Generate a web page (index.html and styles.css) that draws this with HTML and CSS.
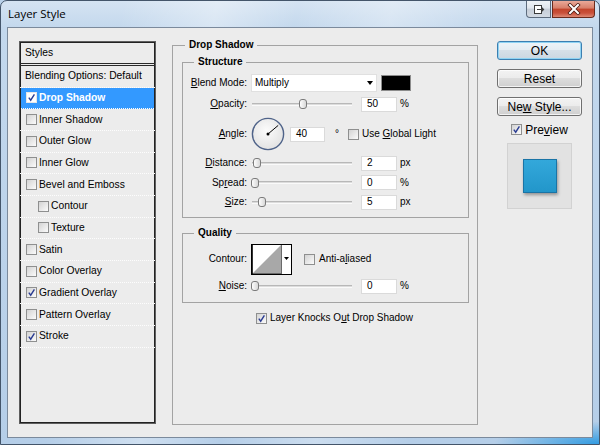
FILE: index.html
```html
<!DOCTYPE html>
<html>
<head>
<meta charset="utf-8">
<title>Layer Style</title>
<link rel="stylesheet" href="styles.css">
</head>
<body>
<div class="window">
  <div class="titlebar">
    <span class="caption">Layer Style</span>
    <div class="caption-buttons">
      <span class="cbtn cbtn-extra">
        <svg width="12" height="11" viewBox="0 0 12 11"><rect x="1.5" y="1.5" width="7" height="8" fill="#fff" stroke="#3b3b3b"/><path d="M4 5.5 H10.5 M8.5 3.5 L10.5 5.5 L8.5 7.5" fill="none" stroke="#3b3b3b" stroke-width="1.2"/></svg>
      </span>
      <span class="cbtn cbtn-close">
        <svg width="14" height="12" viewBox="0 0 14 12"><path d="M3 2 L11 10 M11 2 L3 10" stroke="#4a1a10" stroke-width="3.6" stroke-linecap="square"/><path d="M3 2 L11 10 M11 2 L3 10" stroke="#fff" stroke-width="2" stroke-linecap="square"/></svg>
      </span>
    </div>
  </div>

  <div class="client">
    <div class="styles-panel">
      <div class="styles-head">Styles</div>
      <div class="style-row plain">Blending Options: Default</div>
      <div class="style-row selected"><span class="cb"><svg viewBox="0 0 9 9"><path d="M1.8 4.6 L3.7 7.2 L7.4 1.4"/></svg></span>Drop Shadow</div>
      <div class="style-row"><span class="cb"></span>Inner Shadow</div>
      <div class="style-row"><span class="cb"></span>Outer Glow</div>
      <div class="style-row"><span class="cb"></span>Inner Glow</div>
      <div class="style-row"><span class="cb"></span>Bevel and Emboss</div>
      <div class="style-row sub"><span class="cb"></span>Contour</div>
      <div class="style-row sub"><span class="cb"></span>Texture</div>
      <div class="style-row"><span class="cb"></span>Satin</div>
      <div class="style-row"><span class="cb"></span>Color Overlay</div>
      <div class="style-row"><span class="cb"><svg viewBox="0 0 9 9"><path d="M1.8 4.6 L3.7 7.2 L7.4 1.4"/></svg></span>Gradient Overlay</div>
      <div class="style-row"><span class="cb"></span>Pattern Overlay</div>
      <div class="style-row"><span class="cb"><svg viewBox="0 0 9 9"><path d="M1.8 4.6 L3.7 7.2 L7.4 1.4"/></svg></span>Stroke</div>
    </div>

    <fieldset class="group group-outer">
      <legend>Drop Shadow</legend>

      <fieldset class="group group-inner group-structure">
        <legend>Structure</legend>
        <div class="form-grid structure-grid">
          <span class="lbl"><u>B</u>lend Mode:</span>
          <div class="ctl">
            <div class="select"><span>Multiply</span><span class="select-arrow"></span></div>
            <span class="swatch"></span>
          </div>

          <span class="lbl"><u>O</u>pacity:</span>
          <div class="ctl">
            <div class="slider"><span class="track"></span><span class="thumb" style="left:47px"></span></div>
            <span class="num">50</span><span class="unit">%</span>
          </div>

          <span class="lbl"><u>A</u>ngle:</span>
          <div class="ctl">
            <svg class="dial" width="34" height="34" viewBox="0 0 34 34">
              <defs><radialGradient id="dg" cx="45%" cy="40%" r="65%"><stop offset="0" stop-color="#fcfcfc"/><stop offset="1" stop-color="#e0e0e0"/></radialGradient></defs>
              <circle cx="17" cy="17" r="15.6" fill="url(#dg)" stroke="#4f6389" stroke-width="1.4"/>
              <line x1="17" y1="17" x2="27.2" y2="8.4" stroke="#000" stroke-width="1"/>
              <circle cx="17" cy="17" r="1.5" fill="#000"/>
            </svg>
            <span class="num num-angle">40</span><span class="deg">°</span>
            <span class="check-label check-global"><span class="cb"></span><span>Use <u>G</u>lobal Light</span></span>
          </div>

          <span class="lbl"><u>D</u>istance:</span>
          <div class="ctl">
            <div class="slider"><span class="track"></span><span class="thumb" style="left:1px"></span></div>
            <span class="num">2</span><span class="unit">px</span>
          </div>

          <span class="lbl">Sp<u>r</u>ead:</span>
          <div class="ctl">
            <div class="slider"><span class="track"></span><span class="thumb" style="left:-1px"></span></div>
            <span class="num">0</span><span class="unit">%</span>
          </div>

          <span class="lbl"><u>S</u>ize:</span>
          <div class="ctl">
            <div class="slider"><span class="track"></span><span class="thumb" style="left:6px"></span></div>
            <span class="num">5</span><span class="unit">px</span>
          </div>
        </div>
      </fieldset>

      <fieldset class="group group-inner group-quality">
        <legend>Quality</legend>
        <div class="form-grid quality-grid">
          <span class="lbl">Contour:</span>
          <div class="ctl">
            <svg class="contour" width="41" height="31" viewBox="0 0 41 31">
              <rect x="0.5" y="0.5" width="40" height="30" fill="#fff" stroke="#000"/>
              <polygon points="1.5,29.5 30,1 30,29.5" fill="#a8a8a8"/>
              <line x1="30.5" y1="1" x2="30.5" y2="30" stroke="#6a6a6a"/>
              <path d="M1.2 1 V30 H30" fill="none" stroke="#000" stroke-width="1.2"/>
              <polygon points="33,13 38,13 35.5,16" fill="#000"/>
            </svg>
            <span class="check-label check-anti"><span class="cb"></span><span>Anti-a<u>l</u>iased</span></span>
          </div>

          <span class="lbl"><u>N</u>oise:</span>
          <div class="ctl">
            <div class="slider"><span class="track"></span><span class="thumb" style="left:-1px"></span></div>
            <span class="num">0</span><span class="unit">%</span>
          </div>
        </div>
      </fieldset>

      <div class="knockout check-label"><span class="cb"><svg viewBox="0 0 9 9"><path d="M1.8 4.6 L3.7 7.2 L7.4 1.4"/></svg></span><span>Layer Knocks O<u>u</u>t Drop Shadow</span></div>
    </fieldset>

    <div class="actions">
      <div class="btn btn-default"><span>OK</span></div>
      <div class="btn"><span>Reset</span></div>
      <div class="btn"><span>Ne<u>w</u> Style...</span></div>
      <div class="preview-check check-label"><span class="cb"><svg viewBox="0 0 9 9"><path d="M1.8 4.6 L3.7 7.2 L7.4 1.4"/></svg></span><span>Pre<u>v</u>iew</span></div>
      <div class="preview-box"><span class="preview-swatch"></span></div>
    </div>
  </div>
</div>
</body>
</html>
```

FILE: styles.css
```css
* { box-sizing: border-box; }
html, body { margin: 0; padding: 0; }
body {
  width: 600px;
  height: 445px;
  overflow: hidden;
  font-family: "Liberation Sans", Arial, sans-serif;
  font-size: 10px;
  line-height: 12px;
  color: #000;
  background: #b9d1ea;
}
u { text-decoration: underline; text-underline-offset: 1px; }

.window {
  width: 600px;
  height: 445px;
  display: flex;
  flex-direction: column;
  padding: 0 6px 6px 6px;
  border: 1px solid #44556a;
  border-radius: 7px 7px 0 0;
  background:
    radial-gradient(ellipse 140px 30px at 100% 100%, rgba(35,150,225,.9), rgba(35,150,225,0) 75%),
    linear-gradient(100deg, rgba(255,255,255,0) 18%, rgba(255,255,255,.35) 32%, rgba(255,255,255,0) 44%, rgba(255,255,255,.3) 58%, rgba(255,255,255,0) 72%),
    linear-gradient(180deg, #d5e3f2 0, #c3d8ed 27px, #b5cee8 100%);
}

.titlebar { height: 26px; flex: none; display: flex; align-items: flex-start; }
.caption {
  font-family: "Open Sans", "Liberation Sans", sans-serif;
  font-size: 11.5px;
  line-height: 14px;
  padding: 6px 0 0 1px;
}
.caption-buttons { margin-left: auto; margin-right: -2px; display: flex; gap: 1px; }
.cbtn {
  height: 17px;
  display: flex;
  align-items: center;
  justify-content: center;
  border: 1px solid #5d6b7d;
  border-top: none;
}
.cbtn-extra {
  width: 25px;
  border-radius: 0 0 0 4px;
  background: linear-gradient(#eef2f6, #dfe5ec 45%, #c6cdd7 50%, #d3dae3);
}
.cbtn-close {
  width: 43px;
  border-color: #6b2a1c;
  border-radius: 0 0 4px 0;
  background: linear-gradient(#eaa998, #d77e69 45%, #c2442b 50%, #c9503a 75%, #de8a75);
}

.client {
  flex: 1;
  display: flex;
  align-items: flex-start;
  padding: 11px 0 0 11px;
  background: #ececec;
  border: 1px solid #7b8a9c;
}

/* left list */
.styles-panel {
  flex: none;
  width: 137px;
  height: 383px;
  margin-top: 2px;
  border: 1px solid #5e5e5e;
  box-shadow: inset 0 0 0 1px #222;
  font-size: 10.3px;
}
.styles-head {
  height: 24px;
  padding: 1px 0 0 5px;
  display: flex;
  align-items: center;
  border-bottom: 3px double #2a2a2a;
}
.style-row {
  height: 21.67px;
  display: flex;
  align-items: center;
  padding-left: 6px;
  border-bottom: 1px dotted #fdfdfd;
  white-space: nowrap;
}
.style-row.plain { padding-left: 5px; }
.style-row.sub { padding-left: 18px; }
.style-row.selected { background: #3399ff; color: #fff; font-weight: bold; margin: 0 1px; padding-left: 5px; }
.style-row .cb { margin-right: 2px; }

/* checkbox */
.cb {
  flex: none;
  width: 11px;
  height: 11px;
  display: inline-flex;
  align-items: center;
  justify-content: center;
  border: 1px solid #8e8f8f;
  background: linear-gradient(135deg, #d3d3d3, #fbfbfb);
}
.cb svg { width: 9px; height: 9px; }
.cb path { fill: none; stroke: #2a3c92; stroke-width: 1.4; }
.selected .cb { background: #fff; border-color: #e6e6e6; }

/* group boxes */
.group {
  margin: 0;
  padding: 0;
  min-width: 0;
  border: 1px solid #a3a3a3;
}
.group > legend { padding: 0 4px; font-weight: bold; line-height: 12px; }
.group-outer {
  flex: none;
  width: 306px;
  height: 386px;
  margin-left: 16px;
  padding: 0 8px 0 9px;
}
.group-outer > legend { margin-left: 3px; }
.group-inner { padding: 4px 0 5px 0; }
.group-inner > legend { margin-left: 11px; }
.group-structure { margin-top: 5px; }
.group-quality { margin-top: 9px; }

.form-grid {
  display: grid;
  grid-template-columns: 64px auto;
  column-gap: 4px;
  align-items: center;
}
.structure-grid { grid-template-rows: 21px 22px 38px 20px 19px 20px; }
.quality-grid { grid-template-rows: 32px 22px; }
.lbl { text-align: right; white-space: nowrap; }
.ctl { display: flex; align-items: center; white-space: nowrap; }

.select {
  width: 126px;
  height: 18px;
  display: flex;
  align-items: center;
  justify-content: space-between;
  padding: 0 3px 0 3px;
  background: #fff;
  border: 1px solid #e0e0e0;
}
.select-arrow {
  width: 0;
  height: 0;
  border-left: 3.5px solid transparent;
  border-right: 3.5px solid transparent;
  border-top: 4px solid #000;
}
.swatch { width: 30px; height: 16px; margin-left: 4px; background: #000; border: 1px solid #8c8c8c; }

.slider {
  position: relative;
  width: 100px;
  height: 12px;
  margin-left: 1px;
  display: flex;
  align-items: center;
}
.track {
  flex: 1;
  height: 3px;
  border-top: 1px solid #b8b8b8;
  border-bottom: 1px solid #fafafa;
  background: #dcdcdc;
}
.thumb {
  position: absolute;
  top: 1px;
  width: 8px;
  height: 10px;
  border: 1px solid #7b7b7b;
  border-radius: 3px;
  background: linear-gradient(90deg, #fdfdfd, #d8d8d8);
}

.num {
  width: 36px;
  height: 15px;
  margin-left: 9px;
  padding-left: 5px;
  display: flex;
  align-items: center;
  background: #fff;
  border: 1px solid #dadada;
}
.num-angle { width: 35px; margin-left: 5px; }
.unit { margin-left: 3px; }
.deg { margin-left: 10px; }

.check-label { display: flex; align-items: center; white-space: nowrap; }
.check-label .cb { margin-right: 3px; }
.check-global { margin-left: 9px; }
.check-anti { margin-left: 12px; }
.check-anti .cb { margin-right: 4px; }

.knockout { height: 12px; margin: 9px 0 0 74px; }

/* right column */
.actions {
  flex: none;
  width: 85px;
  margin: 2px 0 0 19px;
  display: flex;
  flex-direction: column;
  align-items: center;
  font-size: 12px;
  line-height: 14px;
}
.btn {
  width: 85px;
  height: 19px;
  display: flex;
  align-items: center;
  justify-content: center;
  white-space: nowrap;
  border: 1px solid #707070;
  border-radius: 3px;
  background: linear-gradient(#f3f3f3, #ebebeb 49%, #dddddd 50%, #cfcfcf);
  box-shadow: inset 0 0 0 1px rgba(255,255,255,.75);
}
.btn + .btn { margin-top: 9px; }
.btn-default {
  border-color: #3c7fb1;
  box-shadow: inset 0 0 0 1px #8fd3f3;
  background: linear-gradient(#eef4f8, #e4ecf2 49%, #d6e0e8 50%, #cbd7e1);
}
.preview-check { margin-top: 7px; height: 13px; }
.preview-box {
  margin-top: 7px;
  width: 65px;
  height: 66px;
  display: flex;
  align-items: center;
  justify-content: center;
  background: #e2e2e2;
  border: 1px solid #d2d2d2;
}
.preview-swatch {
  width: 34px;
  height: 34px;
  background: linear-gradient(#33a8db, #2296ca);
  border: 1px solid #1a74a6;
  box-shadow: 1px 2px 3px rgba(0,0,0,.35);
}
```
